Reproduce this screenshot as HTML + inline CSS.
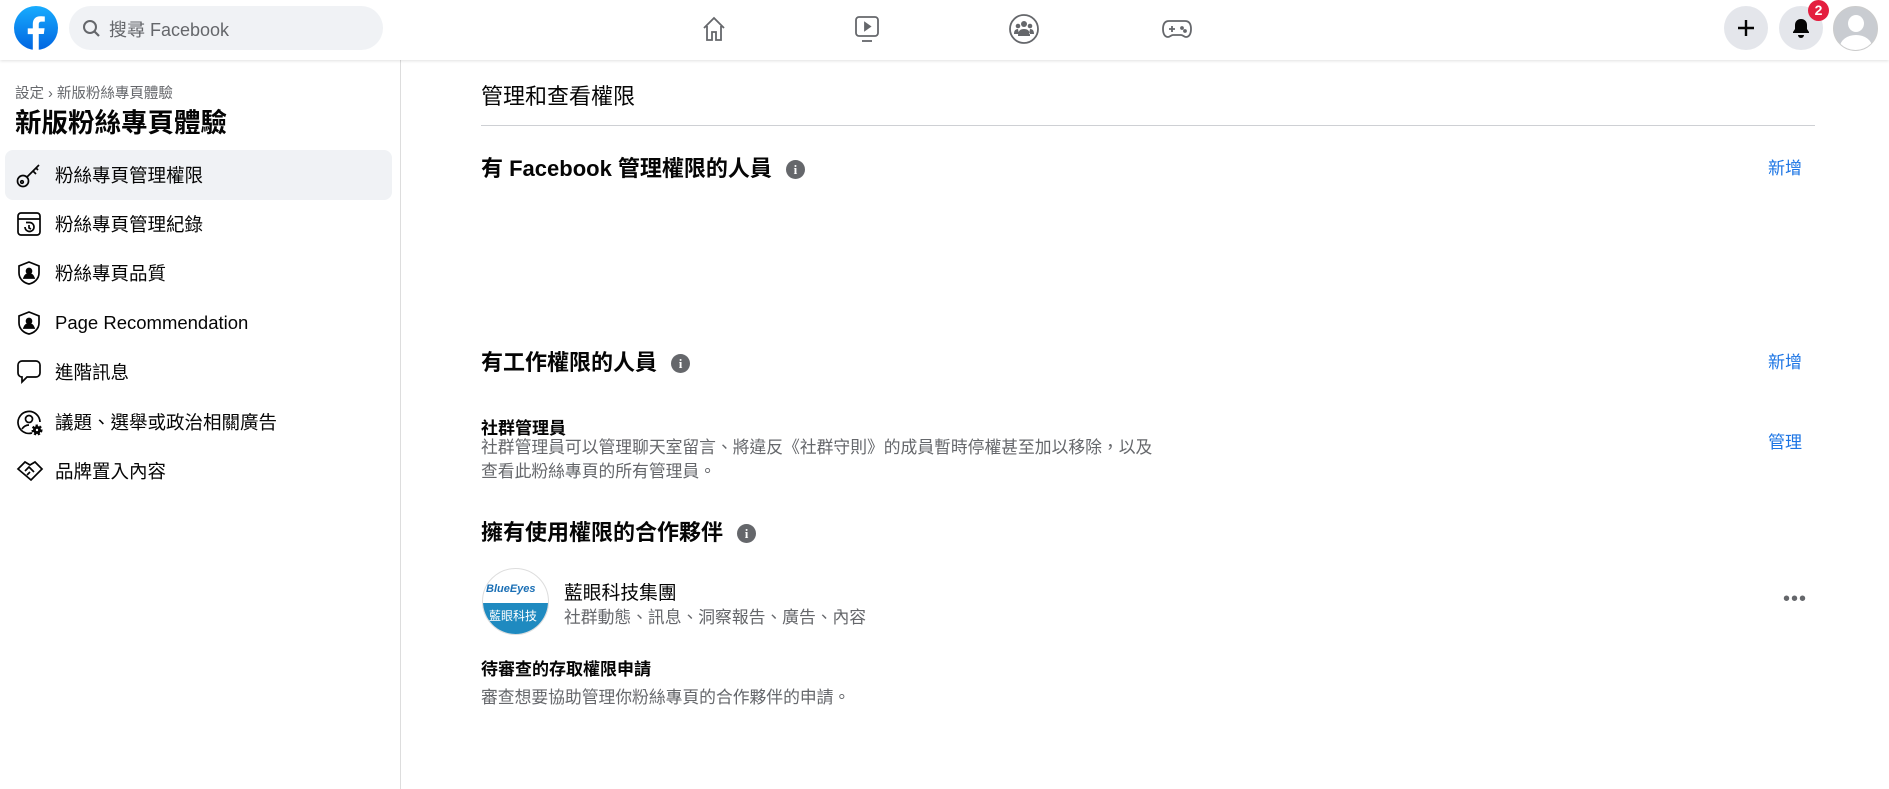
<!DOCTYPE html>
<html><head><meta charset="utf-8"><style>
*{box-sizing:border-box;margin:0;padding:0}
body{width:1889px;height:789px;background:#fff;font-family:"Liberation Sans","Noto Sans CJK TC",sans-serif;color:#050505;position:relative;overflow:hidden}
.hdr{position:absolute;left:0;top:0;width:1889px;height:60px;background:#fff;box-shadow:0 1px 3px rgba(0,0,0,.12);z-index:2}
.abs{position:absolute}
.side{position:absolute;left:0;top:60px;width:401px;height:729px;border-right:1px solid #ddd}
.item{position:absolute;left:5px;width:387px;height:50px;border-radius:8px;font-size:18.5px;display:flex;align-items:center;padding-left:50px}
.item svg{position:absolute;left:11px;top:12px}
.t{position:absolute;white-space:nowrap}
.h2{font-size:22px;font-weight:bold}
.blue{color:#1b74e4;font-size:17px}
.info{display:inline-block;width:19px;height:19px;border-radius:50%;background:#65676b;color:#fff;font-size:13px;font-weight:bold;text-align:center;line-height:19px;vertical-align:2px;margin-left:14px;font-family:"Liberation Serif",serif}
.gray{color:#65676b;font-size:16.8px}
.circ{position:absolute;width:44px;height:44px;border-radius:50%;background:#e4e6eb}
</style></head><body>
<div class="hdr">
<svg class="abs" style="left:14px;top:6px" width="44" height="44" viewBox="0 0 40 40"><defs><linearGradient id="g" x1="0" y1="0" x2="0" y2="1"><stop offset="0" stop-color="#18acfe"/><stop offset="1" stop-color="#0165e1"/></linearGradient></defs><circle cx="20" cy="20" r="20" fill="url(#g)"/><path d="M22.5 40V25.5h4.6l.7-5.3h-5.3v-3.4c0-1.5.5-2.6 2.7-2.6h2.8V9.5c-.5-.1-2.2-.2-4.1-.2-4.1 0-6.8 2.5-6.8 7v4h-4.6v5.3h4.6V40z" fill="#fff"/></svg>
<div class="abs" style="left:69px;top:6px;width:314px;height:44px;border-radius:22px;background:#f0f2f5"></div>
<svg class="abs" style="left:82px;top:19px" width="19" height="19" viewBox="0 0 19 19"><circle cx="8" cy="8" r="6" fill="none" stroke="#65676b" stroke-width="2"/><path d="M12.5 12.5L17 17" stroke="#65676b" stroke-width="2.2"/></svg>
<div class="t" style="left:109px;top:16px;font-size:18px;color:#65676b">搜尋 Facebook</div>
<svg class="abs" style="left:700px;top:15px" width="28" height="28" viewBox="0 0 28 28" fill="none" stroke="#65676b" stroke-width="1.8"><path d="M4 13L14 3l10 10M7 11v14h5v-8h4v8h5V11"/></svg>
<svg class="abs" style="left:853px;top:14px" width="28" height="30" viewBox="0 0 28 30" fill="none" stroke="#65676b" stroke-width="1.8"><rect x="3" y="3" width="22" height="19" rx="3"/><path d="M12 9v7l5-3.5z" fill="#65676b"/><path d="M9 27h10"/></svg>
<svg class="abs" style="left:1008px;top:13px" width="32" height="32" viewBox="0 0 32 32"><circle cx="16" cy="16" r="14" fill="none" stroke="#65676b" stroke-width="1.8"/><circle cx="16" cy="11" r="3" fill="#65676b"/><circle cx="10" cy="13" r="2.3" fill="#65676b"/><circle cx="22" cy="13" r="2.3" fill="#65676b"/><path d="M10 23c0-5 2-7 6-7s6 2 6 7zM6 21c0-3 1-5 4-5l1 5zM26 21c0-3-1-5-4-5l-1 5z" fill="#65676b"/></svg>
<svg class="abs" style="left:1161px;top:16px" width="32" height="26" viewBox="0 0 32 26" fill="none" stroke="#65676b" stroke-width="1.8"><path d="M8 5h16c4 0 6 3 6 8s-2 8-5 8c-2 0-3-2-5-2h-8c-2 0-3 2-5 2-3 0-5-3-5-8s2-8 6-8z"/><path d="M8 13h6M11 10v6"/><circle cx="21" cy="12" r="1" fill="#65676b"/><circle cx="24" cy="15" r="1" fill="#65676b"/></svg>
<div class="circ" style="left:1724px;top:6px"></div>
<svg class="abs" style="left:1736px;top:18px" width="20" height="20" viewBox="0 0 20 20"><path d="M10 2v16M2 10h16" stroke="#050505" stroke-width="2.4"/></svg>
<div class="circ" style="left:1779px;top:6px"></div>
<svg class="abs" style="left:1791px;top:17px" width="20" height="22" viewBox="0 0 20 22"><path d="M10 2c-4 0-6 3-6 6v4l-2 3v1h16v-1l-2-3V8c0-3-2-6-6-6z" fill="#050505"/><path d="M7 18a3 3 0 006 0z" fill="#050505"/></svg>
<div class="abs" style="left:1808px;top:0;width:21px;height:21px;border-radius:50%;background:#e41e3f;color:#fff;font-size:14px;font-weight:bold;text-align:center;line-height:21px">2</div>
<div class="abs" style="left:1833px;top:6px;width:45px;height:45px;border-radius:50%;background:#c9ccd1;overflow:hidden;border:1px solid #ccc"><div class="abs" style="left:14px;top:8px;width:16px;height:17px;border-radius:50%;background:#fff"></div><div class="abs" style="left:6px;top:28px;width:32px;height:24px;border-radius:50%;background:#fff"></div></div>
</div>

<div class="side">
<div class="t" style="left:15px;top:22px;font-size:14.5px;color:#65676b">設定 › 新版粉絲專頁體驗</div>
<div class="t" style="left:15px;top:41px;font-size:26.5px;font-weight:bold">新版粉絲專頁體驗</div>
<div class="item" style="top:90px;background:#f0f2f5"><svg width="26" height="26" viewBox="0 0 26 26" fill="none" stroke="#050505" stroke-width="1.7"><circle cx="7" cy="19" r="5.5"/><circle cx="6" cy="20" r="1.3"/><path d="M11 15L23 3M17 9l3 3M20 6l2 2"/></svg>粉絲專頁管理權限</div>
<div class="item" style="top:139px"><svg width="26" height="26" viewBox="0 0 26 26" fill="none" stroke="#050505" stroke-width="1.7"><rect x="2" y="2" width="22" height="22" rx="3"/><path d="M2 8h22"/><path d="M9 16a4.5 4.5 0 104.5-4.5H10M13 14v3l2 1"/></svg>粉絲專頁管理紀錄</div>
<div class="item" style="top:188px"><svg width="26" height="26" viewBox="0 0 26 26" fill="none" stroke="#050505" stroke-width="1.7"><path d="M13 2l10 4v7c0 6-5 10-10 11C8 23 3 19 3 13V6z"/><circle cx="13" cy="11" r="2.5" fill="#050505"/><path d="M8 18c1-3 3-4 5-4s4 1 5 4z" fill="#050505"/></svg>粉絲專頁品質</div>
<div class="item" style="top:238px"><svg width="26" height="26" viewBox="0 0 26 26" fill="none" stroke="#050505" stroke-width="1.7"><path d="M13 2l10 4v7c0 6-5 10-10 11C8 23 3 19 3 13V6z"/><circle cx="13" cy="11" r="2.5" fill="#050505"/><path d="M8 18c1-3 3-4 5-4s4 1 5 4z" fill="#050505"/></svg>Page Recommendation</div>
<div class="item" style="top:287px"><svg width="26" height="26" viewBox="0 0 26 26" fill="none" stroke="#050505" stroke-width="1.7"><path d="M6 2h14a4 4 0 014 4v8a4 4 0 01-4 4h-9l-5 5v-5a4 4 0 01-4-4V6a4 4 0 014-4z"/></svg>進階訊息</div>
<div class="item" style="top:337px"><svg width="28" height="28" viewBox="0 0 28 28" fill="none" stroke="#050505" stroke-width="1.7"><path d="M16 24A11 11 0 1124 13"/><circle cx="13" cy="10" r="3.5"/><path d="M6 20c2-3 4-4 7-4"/><circle cx="21" cy="21" r="4" fill="#050505" stroke-dasharray="2 1.5" stroke-width="3"/><circle cx="21" cy="21" r="1.2" fill="#fff" stroke="none"/></svg>議題、選舉或政治相關廣告</div>
<div class="item" style="top:386px"><svg width="28" height="26" viewBox="0 0 28 26" fill="none" stroke="#050505" stroke-width="1.7"><path d="M2 11l7-7 5 3 5-3 7 7-11 11z"/><path d="M9 13l4-4 5 5M11 17l3-3"/></svg>品牌置入內容</div>
</div>

<div class="t" style="left:481px;top:79px;font-size:22px">管理和查看權限</div>
<div class="abs" style="left:481px;top:125px;width:1334px;height:1px;background:#ced0d4"></div>
<div class="t h2" style="left:481px;top:151px">有 Facebook 管理權限的人員<span class="info">i</span></div>
<div class="t blue" style="left:1768px;top:154px">新增</div>
<div class="t h2" style="left:481px;top:345px">有工作權限的人員<span class="info">i</span></div>
<div class="t blue" style="left:1768px;top:348px">新增</div>
<div class="t" style="left:481px;top:414px;font-size:17px;font-weight:bold">社群管理員</div>
<div class="t gray" style="left:481px;top:436px;line-height:24px">社群管理員可以管理聊天室留言、將違反《社群守則》的成員暫時停權甚至加以移除，以及<br>查看此粉絲專頁的所有管理員。</div>
<div class="t blue" style="left:1768px;top:428px">管理</div>
<div class="t h2" style="left:481px;top:515px">擁有使用權限的合作夥伴<span class="info">i</span></div>
<div class="abs" style="left:482px;top:568px;width:67px;height:67px;border-radius:50%;overflow:hidden;border:1px solid #ddd;background:#fff">
<div class="t" style="left:3px;top:14px;font-size:11px;font-weight:bold;font-style:italic;color:#1a6fb5">BlueEyes</div>
<div class="abs" style="left:0;top:34px;width:67px;height:33px;background:#1f8ac0"></div>
<div class="t" style="left:6px;top:38px;font-size:12px;color:#fff">藍眼科技</div></div>
<div class="t" style="left:564px;top:578px;font-size:18.8px">藍眼科技集團</div>
<div class="t gray" style="left:564px;top:604px">社群動態、訊息、洞察報告、廣告、內容</div>
<div class="t" style="left:1783px;top:588px;font-size:20px;color:#65676b;letter-spacing:1px">•••</div>
<div class="t" style="left:481px;top:655px;font-size:17px;font-weight:bold">待審查的存取權限申請</div>
<div class="t gray" style="left:481px;top:684px">審查想要協助管理你粉絲專頁的合作夥伴的申請。</div>
</body></html>
